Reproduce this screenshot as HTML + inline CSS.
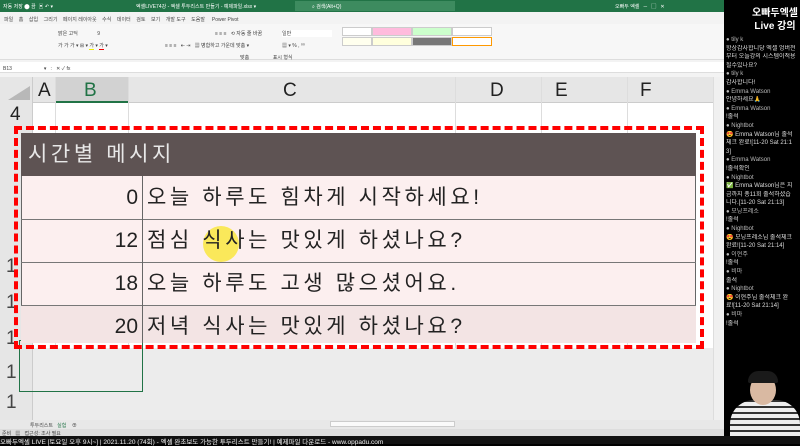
<!DOCTYPE html><html><head><meta charset="utf-8"><style>
*{margin:0;padding:0;box-sizing:border-box}
body{width:800px;height:444px;overflow:hidden;background:#000;font-family:"Liberation Sans","Noto Sans CJK KR",sans-serif;position:relative}
.a{position:absolute}
.t{font-size:5px;color:#444;white-space:nowrap}
.chat div{font-size:6px;color:#ddd;line-height:8.6px;white-space:nowrap;overflow:hidden}
.chat .n{color:#bbb}
.cell{position:absolute;font-size:21px;color:#222;line-height:43px;white-space:nowrap}
.tx{letter-spacing:3.6px}
</style></head><body>
<div class="a" style="left:0;top:0;width:724px;height:436px;background:#f3f3f3"></div>
<div class="a" style="left:0;top:0;width:724px;height:12px;background:#217346"></div>
<div class="a t" style="left:3px;top:3px;color:#fff">자동 저장 ⬤ 끔 &nbsp;▣ ↶ ▾</div>
<div class="a t" style="left:136px;top:3px;color:#fff">엑셀LIVE74강 - 엑셀 투두리스트 만들기 - 예제파일.xlsx ▾</div>
<div class="a" style="left:295px;top:1px;width:160px;height:10px;background:#3d8b5f"></div>
<div class="a t" style="left:312px;top:3px;color:#fff">⌕ 검색(Alt+Q)</div>
<div class="a t" style="left:615px;top:3px;color:#fff">오빠두 엑셀 &nbsp; ─ &nbsp; ▢ &nbsp; ✕</div>
<div class="a t" style="left:4px;top:16px">파일 &nbsp;&nbsp; 홈 &nbsp;&nbsp; 삽입 &nbsp;&nbsp; 그리기 &nbsp;&nbsp; 페이지 레이아웃 &nbsp;&nbsp; 수식 &nbsp;&nbsp; 데이터 &nbsp;&nbsp; 검토 &nbsp;&nbsp; 보기 &nbsp;&nbsp; 개발 도구 &nbsp;&nbsp; 도움말 &nbsp;&nbsp;&nbsp; Power Pivot</div>
<div class="a" style="left:0;top:24px;width:724px;height:36px;background:#f7f7f7;border-bottom:1px solid #ddd"></div>
<div class="a t" style="left:58px;top:30px">맑은 고딕 &nbsp;&nbsp;&nbsp;&nbsp;&nbsp;&nbsp;&nbsp;&nbsp;&nbsp;&nbsp;&nbsp;&nbsp; 9</div>
<div class="a t" style="left:58px;top:42px">가 가 가 ▾ ⊞ ▾ <span style="border-bottom:1px solid #ee0">가</span> ▾ <span style="border-bottom:1px solid #e00">가</span> ▾</div>
<div class="a t" style="left:215px;top:30px">≡ ≡ ≡ &nbsp; ⟲ 자동 줄 바꿈</div>
<div class="a t" style="left:165px;top:42px">≡ ≡ ≡ &nbsp; ⇤ ⇥ &nbsp; ▦ 병합하고 가운데 맞춤 ▾</div>
<div class="a t" style="left:282px;top:30px;background:#fff;width:50px">일반</div>
<div class="a t" style="left:282px;top:42px">▦ ▾ % , ⁰⁰</div>
<div class="a" style="left:342px;top:27px;width:30px;height:9px;background:#fff;border:1px solid #ccc"></div>
<div class="a" style="left:372px;top:27px;width:40px;height:9px;background:#fbd;border:1px solid #ccc"></div>
<div class="a" style="left:412px;top:27px;width:40px;height:9px;background:#cfc;border:1px solid #ccc"></div>
<div class="a" style="left:452px;top:27px;width:40px;height:9px;background:#fff;border:1px solid #ccc"></div>
<div class="a" style="left:342px;top:37px;width:30px;height:9px;background:#ffe;border:1px solid #ccc"></div>
<div class="a" style="left:372px;top:37px;width:40px;height:9px;background:#ffd;border:1px solid #ccc"></div>
<div class="a" style="left:412px;top:37px;width:40px;height:9px;background:#777;border:1px solid #ccc"></div>
<div class="a" style="left:452px;top:37px;width:40px;height:9px;background:#fff;border:1px solid #f90"></div>
<div class="a t" style="left:240px;top:54px">맞춤 &nbsp;&nbsp;&nbsp;&nbsp;&nbsp;&nbsp;&nbsp;&nbsp;&nbsp;&nbsp;&nbsp;&nbsp;&nbsp;&nbsp;&nbsp; 표시 형식</div>
<div class="a" style="left:0;top:62px;width:724px;height:11px;background:#fff;border-bottom:1px solid #ddd"></div>
<div class="a t" style="left:3px;top:65px">B13 &nbsp;&nbsp;&nbsp;&nbsp;&nbsp;&nbsp;&nbsp;&nbsp;&nbsp;&nbsp;&nbsp;&nbsp;&nbsp;&nbsp;&nbsp;&nbsp;&nbsp;&nbsp;&nbsp;&nbsp;&nbsp; ▾ &nbsp; : &nbsp; ✕ ✓ fx</div>
<!-- sheet -->
<div class="a" style="left:0;top:77px;width:713px;height:343px;background:#fff"></div>
<div class="a" style="left:0;top:77px;width:713px;height:26px;background:#e6e6e6;border-bottom:1px solid #ccc"></div>
<div class="a" style="left:56px;top:77px;width:72px;height:26px;background:#d2d2d2;border-bottom:2px solid #217346"></div>
<div class="a" style="left:0;top:77px;width:33px;height:343px;background:#e6e6e6;border-right:1px solid #ccc"></div>
<div class="a" style="left:8px;top:86px;width:0;height:0;border-left:22px solid transparent;border-bottom:14px solid #b8b8b8"></div>
<div class="a" style="left:38px;top:80px;font-size:19px;color:#222">A</div>
<div class="a" style="left:84px;top:80px;font-size:19px;color:#217346">B</div>
<div class="a" style="left:283px;top:80px;font-size:19px;color:#222">C</div>
<div class="a" style="left:490px;top:80px;font-size:19px;color:#222">D</div>
<div class="a" style="left:555px;top:80px;font-size:19px;color:#222">E</div>
<div class="a" style="left:640px;top:80px;font-size:19px;color:#222">F</div>
<div class="a" style="left:55px;top:77px;width:1px;height:343px;background:#ddd"></div>
<div class="a" style="left:128px;top:77px;width:1px;height:343px;background:#ddd"></div>
<div class="a" style="left:455px;top:77px;width:1px;height:343px;background:#ddd"></div>
<div class="a" style="left:541px;top:77px;width:1px;height:343px;background:#ddd"></div>
<div class="a" style="left:627px;top:77px;width:1px;height:343px;background:#ddd"></div>
<div class="a" style="left:10px;top:104px;font-size:19px;color:#222">4</div>
<div class="a" style="left:6px;top:256px;font-size:19px;color:#444">1</div>
<div class="a" style="left:6px;top:292px;font-size:19px;color:#444">1</div>
<div class="a" style="left:6px;top:328px;font-size:19px;color:#444">1</div>
<div class="a" style="left:33px;top:348px;width:680px;height:72px;background:#ececec"></div>
<div class="a" style="left:19px;top:340px;width:124px;height:52px;border:1.5px solid #217346"></div>
<div class="a" style="left:6px;top:362px;font-size:19px;color:#444">1</div>
<div class="a" style="left:6px;top:392px;font-size:19px;color:#444">1</div>
<div class="a" style="left:713px;top:77px;width:10px;height:343px;background:#f0f0f0;border-left:1px solid #ddd"></div>
<!-- table -->
<div class="a" style="left:21px;top:133px;width:675px;height:43px;background:#5e5353"></div>
<div class="a tx" style="left:28px;top:133px;font-size:21px;line-height:43px;color:#e8e8e8;white-space:nowrap">시간별 메시지</div>
<div class="a" style="left:21px;top:176px;width:675px;height:167px;background:#fcefef;border-left:1px solid #666;border-right:1px solid #666"></div>
<div class="a" style="left:21px;top:305px;width:675px;height:38px;background:#f3e4e4"></div>
<div class="a" style="left:21px;top:219px;width:675px;height:1px;background:#777"></div>
<div class="a" style="left:21px;top:262px;width:675px;height:1px;background:#777"></div>
<div class="a" style="left:21px;top:305px;width:675px;height:1px;background:#777"></div>
<div class="a" style="left:142px;top:176px;width:1px;height:167px;background:#666"></div>
<div class="cell" style="left:21px;top:176px;width:117px;text-align:right">0</div>
<div class="cell" style="left:21px;top:219px;width:117px;text-align:right">12</div>
<div class="cell" style="left:21px;top:262px;width:117px;text-align:right">18</div>
<div class="cell" style="left:21px;top:305px;width:117px;text-align:right">20</div>
<div class="a" style="left:203px;top:226px;width:36px;height:36px;border-radius:50%;background:rgba(250,230,40,.75)"></div>
<div class="cell tx" style="left:147px;top:176px">오늘 하루도 힘차게 시작하세요!</div>
<div class="cell tx" style="left:147px;top:219px">점심 식사는 맛있게 하셨나요?</div>
<div class="cell tx" style="left:147px;top:262px">오늘 하루도 고생 많으셨어요.</div>
<div class="cell tx" style="left:147px;top:305px">저녁 식사는 맛있게 하셨나요?</div>
<div class="a" style="left:14px;top:126px;width:690px;height:223px;border:4px dashed #f00"></div>
<!-- tabs/status -->
<div class="a" style="left:0;top:420px;width:724px;height:9px;background:#e8e8e8"></div>
<div class="a t" style="left:30px;top:422px">투두리스트 &nbsp; <span style="color:#217346;border-bottom:1px solid #217346">실험</span> &nbsp;&nbsp; ⊕</div>
<div class="a" style="left:330px;top:421px;width:125px;height:6px;background:#fafafa;border:1px solid #ccc"></div>
<div class="a" style="left:0;top:429px;width:724px;height:7px;background:#ddd"></div>
<div class="a t" style="left:2px;top:430px">준비 &nbsp; ▦ &nbsp; 접근성: 조사 필요</div>
<div class="a" style="left:0;top:436px;width:800px;height:8px;background:#111"></div>
<div class="a" style="left:0;top:436px;font-size:6.5px;color:#eee;white-space:nowrap">오빠두엑셀 LIVE [토요일 오후 9시~] | 2021.11.20 (74회) - 엑셀 완초보도 가능한 투두리스트 만들기! | 예제파일 다운로드 - www.oppadu.com</div>
<!-- chat -->
<div class="a" style="left:724px;top:0;width:76px;height:436px;background:#000"></div>
<div class="a" style="left:750px;top:7px;font-size:10px;line-height:13px;color:#fff;font-weight:bold;white-space:nowrap;text-align:center;width:50px">오빠두엑셀<br>Live 강의</div>
<div class="a chat" style="left:726px;top:36px;width:74px">
<div class="n">● tily k</div><div>항상감사합니당 엑셀 엉버전</div><div>부터 오늘강의 시스템이적용</div><div>될수있나요?</div>
<div class="n">● tily k</div><div>감사합니다!</div>
<div class="n">● Emma Watson</div><div>안녕하세요🙏</div>
<div class="n">● Emma Watson</div><div>!출석</div>
<div class="n">● Nightbot</div><div>😍 Emma Watson님 출석</div><div>체크 완료![11-20 Sat 21:1</div><div>3]</div>
<div class="n">● Emma Watson</div><div>!출석확인</div>
<div class="n">● Nightbot</div><div>✅ Emma Watson님은 지</div><div>금까지 총11회 출석하셨습</div><div>니다.[11-20 Sat 21:13]</div>
<div class="n">● 모닝프레소</div><div>!출석</div>
<div class="n">● Nightbot</div><div>😍 모닝프레소님 출석체크</div><div>완료![11-20 Sat 21:14]</div>
<div class="n">● 이현주</div><div>!출석</div>
<div class="n">● 비마</div><div>출석</div>
<div class="n">● Nightbot</div><div>😍 이현주님 출석체크 완</div><div>료![11-20 Sat 21:14]</div>
<div class="n">● 비마</div><div>!출석</div>
</div>
<div class="a" style="left:730px;top:400px;width:70px;height:36px;border-radius:24px 24px 0 0;background:repeating-linear-gradient(0deg,#eee 0 4px,#333 4px 6px)"></div>
<div class="a" style="left:750px;top:375px;width:26px;height:30px;border-radius:50%;background:#d9b9a2"></div>
<div class="a" style="left:748px;top:371px;width:30px;height:12px;border-radius:12px 12px 2px 2px;background:#1a1a1a"></div>
</body></html>
